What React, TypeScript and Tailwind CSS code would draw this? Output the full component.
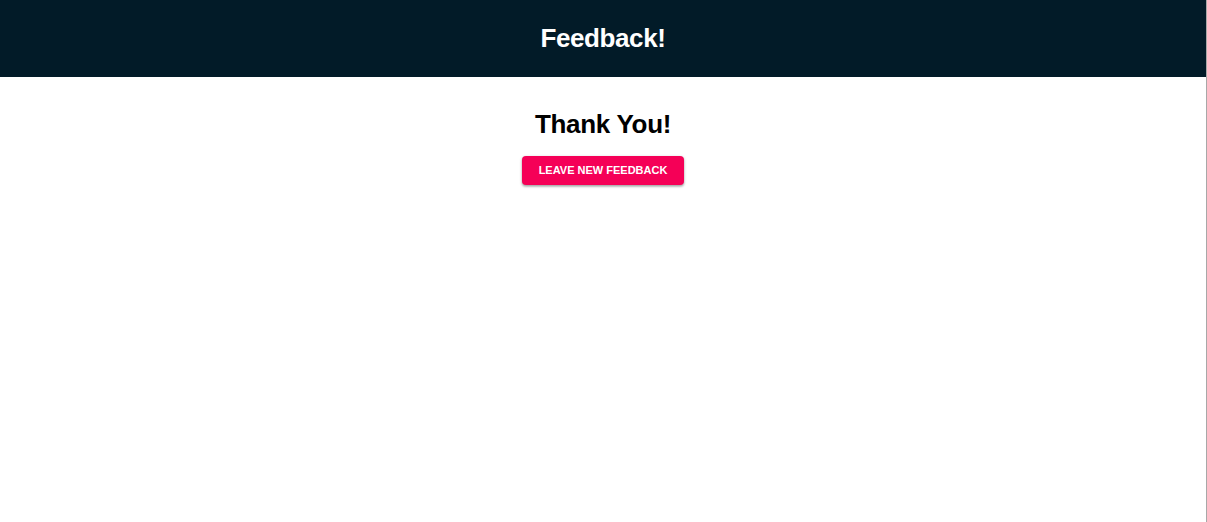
export default function App() {
  return (
    <div
      className="flex min-h-[522px] w-[1207px] flex-col border-r border-[#a8a8a8] bg-white"
      style={{ fontFamily: '"Liberation Sans", Arial, sans-serif' }}
    >
      <header className="flex h-[77px] items-center justify-center bg-[#021b28]">
        <h1 className="text-[26px] font-bold tracking-[-0.4px] text-white">Feedback!</h1>
      </header>
      <main className="flex flex-col items-center pt-[29px]">
        <h2 className="text-[26px] font-bold leading-[36px] tracking-[-0.3px] text-black">Thank You!</h2>
        <button
          type="button"
          className="mt-[14px] h-[29px] w-[162px] rounded-[4px] bg-[#f50057] text-[11px] font-bold uppercase text-white shadow-[0_1px_3px_rgba(0,0,0,0.3),0_2px_2px_rgba(0,0,0,0.14)]"
        >
          Leave new feedback
        </button>
      </main>
    </div>
  );
}
